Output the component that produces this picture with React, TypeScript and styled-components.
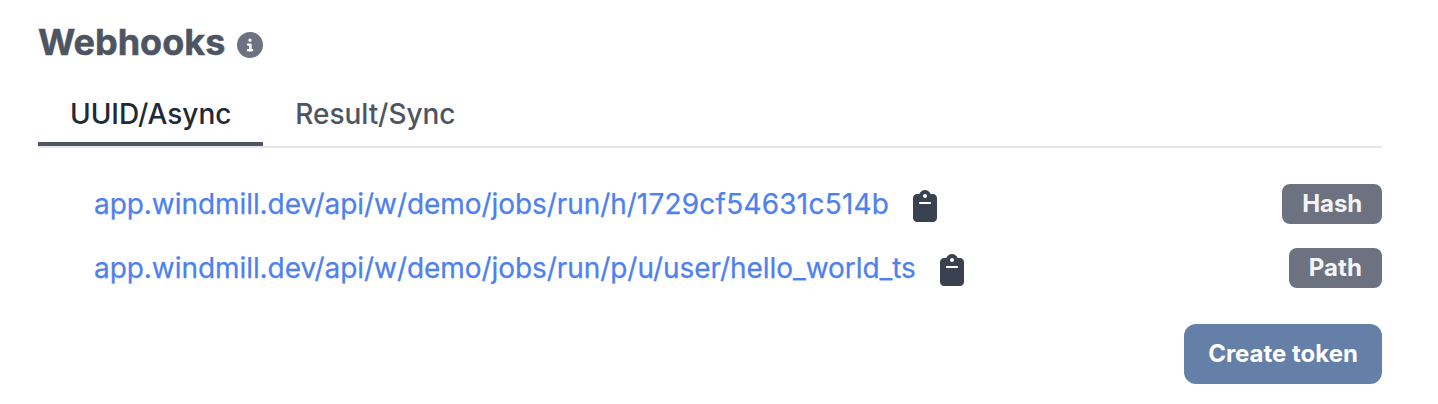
import React from "react";
import styled, { createGlobalStyle } from "styled-components";

const Global = createGlobalStyle`
  * { box-sizing: border-box; }
  body { margin: 0; background: #fff; font-family: Inter, sans-serif; -webkit-font-smoothing: antialiased; }
`;

const Panel = styled.section`
  height: 404px;
  padding: 20px 56px 0 38px;
  overflow: hidden;
`;

const Heading = styled.h2`
  display: flex;
  align-items: center;
  gap: 12px;
  height: 44px;
  margin: 0;
  font-size: 36px;
  font-weight: 700;
  line-height: 44px;
  color: #4d5563;
  -webkit-text-stroke: 0.5px #4d5563;

  svg { margin-top: 6px; }
`;

const Tabs = styled.nav`
  display: flex;
  height: 66px;
  margin-top: 18px;
  border-bottom: 2px solid #e5e7eb;
`;

const Tab = styled.button<{ $active?: boolean }>`
  height: 64px;
  padding: 4px 32px 0;
  border: 0;
  border-bottom: 4px solid ${(p) => (p.$active ? "#4d5563" : "transparent")};
  background: none;
  font: 500 28px/56px Inter, sans-serif;
  letter-spacing: -0.05px;
  color: ${(p) => (p.$active ? "#212936" : "#4d5563")};
`;

const HookList = styled.ul`
  display: flex;
  flex-direction: column;
  gap: 24px;
  margin: 36px 0 0;
  padding: 0 0 0 56px;
  list-style: none;
`;

const HookRow = styled.li`
  display: flex;
  align-items: center;
  height: 40px;

  svg { margin-top: 4px; }
`;

const HookLink = styled.a`
  margin-right: 24px;
  font-size: 28px;
  line-height: 40px;
  letter-spacing: -0.06px;
  color: #4e80ee;
  -webkit-text-stroke: 0.25px #4e80ee;
`;

const HashValue = styled.span`
  letter-spacing: 0.22px;
`;

const Badge = styled.span<{ $tracking: number }>`
  margin-left: auto;
  height: 40px;
  padding: 0 20px;
  border-radius: 8px;
  background: #6d7280;
  font-size: 24px;
  font-weight: 700;
  line-height: 40px;
  letter-spacing: ${(p) => p.$tracking}px;
  color: #f3f4f6;
`;

const Actions = styled.div`
  display: flex;
  justify-content: flex-end;
  margin-top: 36px;
`;

const CreateButton = styled.button`
  height: 60px;
  min-width: 198px;
  padding: 0 24px;
  border: 0;
  border-radius: 12px;
  background: #6580a8;
  font: 700 24px/60px Inter, sans-serif;
  letter-spacing: -0.01px;
  color: #fff;
`;

const InfoIcon = () => (
  <svg width="26" height="26" viewBox="0 0 512 512" fill="#6d7280">
    <path d="M256 512A256 256 0 1 0 256 0a256 256 0 1 0 0 512zM216 336h24V272H216c-13.300 0-24-10.700-24-24s10.700-24 24-24h48c13.300 0 24 10.700 24 24v88h8c13.300 0 24 10.700 24 24s-10.700 24-24 24H216c-13.300 0-24-10.700-24-24s10.700-24 24-24zm40-208a32 32 0 1 1 0 64 32 32 0 1 1 0-64z" />
  </svg>
);

const ClipboardIcon = () => (
  <svg width="24" height="32" viewBox="0 0 384 512" fill="#3a4150">
    <path d="M192 0c-41.800 0-77.400 26.700-90.500 64H64C28.700 64 0 92.700 0 128v320c0 35.300 28.700 64 64 64h256c35.300 0 64-28.700 64-64V128c0-35.300-28.700-64-64-64h-37.500C269.400 26.700 233.800 0 192 0zm0 64a32 32 0 1 1 0 64 32 32 0 1 1 0-64zm-80 128h160c8.800 0 16 7.200 16 16s-7.200 16-16 16H112c-8.800 0-16-7.200-16-16s7.200-16 16-16z" />
  </svg>
);

const base = "app.windmill.dev/api/w/demo/jobs/run/";

const hooks = [
  { prefix: base + "h/", hash: "1729cf54631c514b", kind: "Hash", tracking: -0.15 },
  { prefix: base + "p/u/user/hello_world_ts", hash: "", kind: "Path", tracking: 0.05 },
];

export default function App() {
  return (
    <Panel>
      <Global />
      <Heading>Webhooks <InfoIcon /></Heading>
      <Tabs>
        <Tab $active>UUID/Async</Tab>
        <Tab>Result/Sync</Tab>
      </Tabs>
      <HookList>
        {hooks.map((h) => (
          <HookRow key={h.kind}>
            <HookLink>
              {h.prefix}
              {h.hash && <HashValue>{h.hash}</HashValue>}
            </HookLink>
            <ClipboardIcon />
            <Badge $tracking={h.tracking}>{h.kind}</Badge>
          </HookRow>
        ))}
      </HookList>
      <Actions><CreateButton>Create token</CreateButton></Actions>
    </Panel>
  );
}
